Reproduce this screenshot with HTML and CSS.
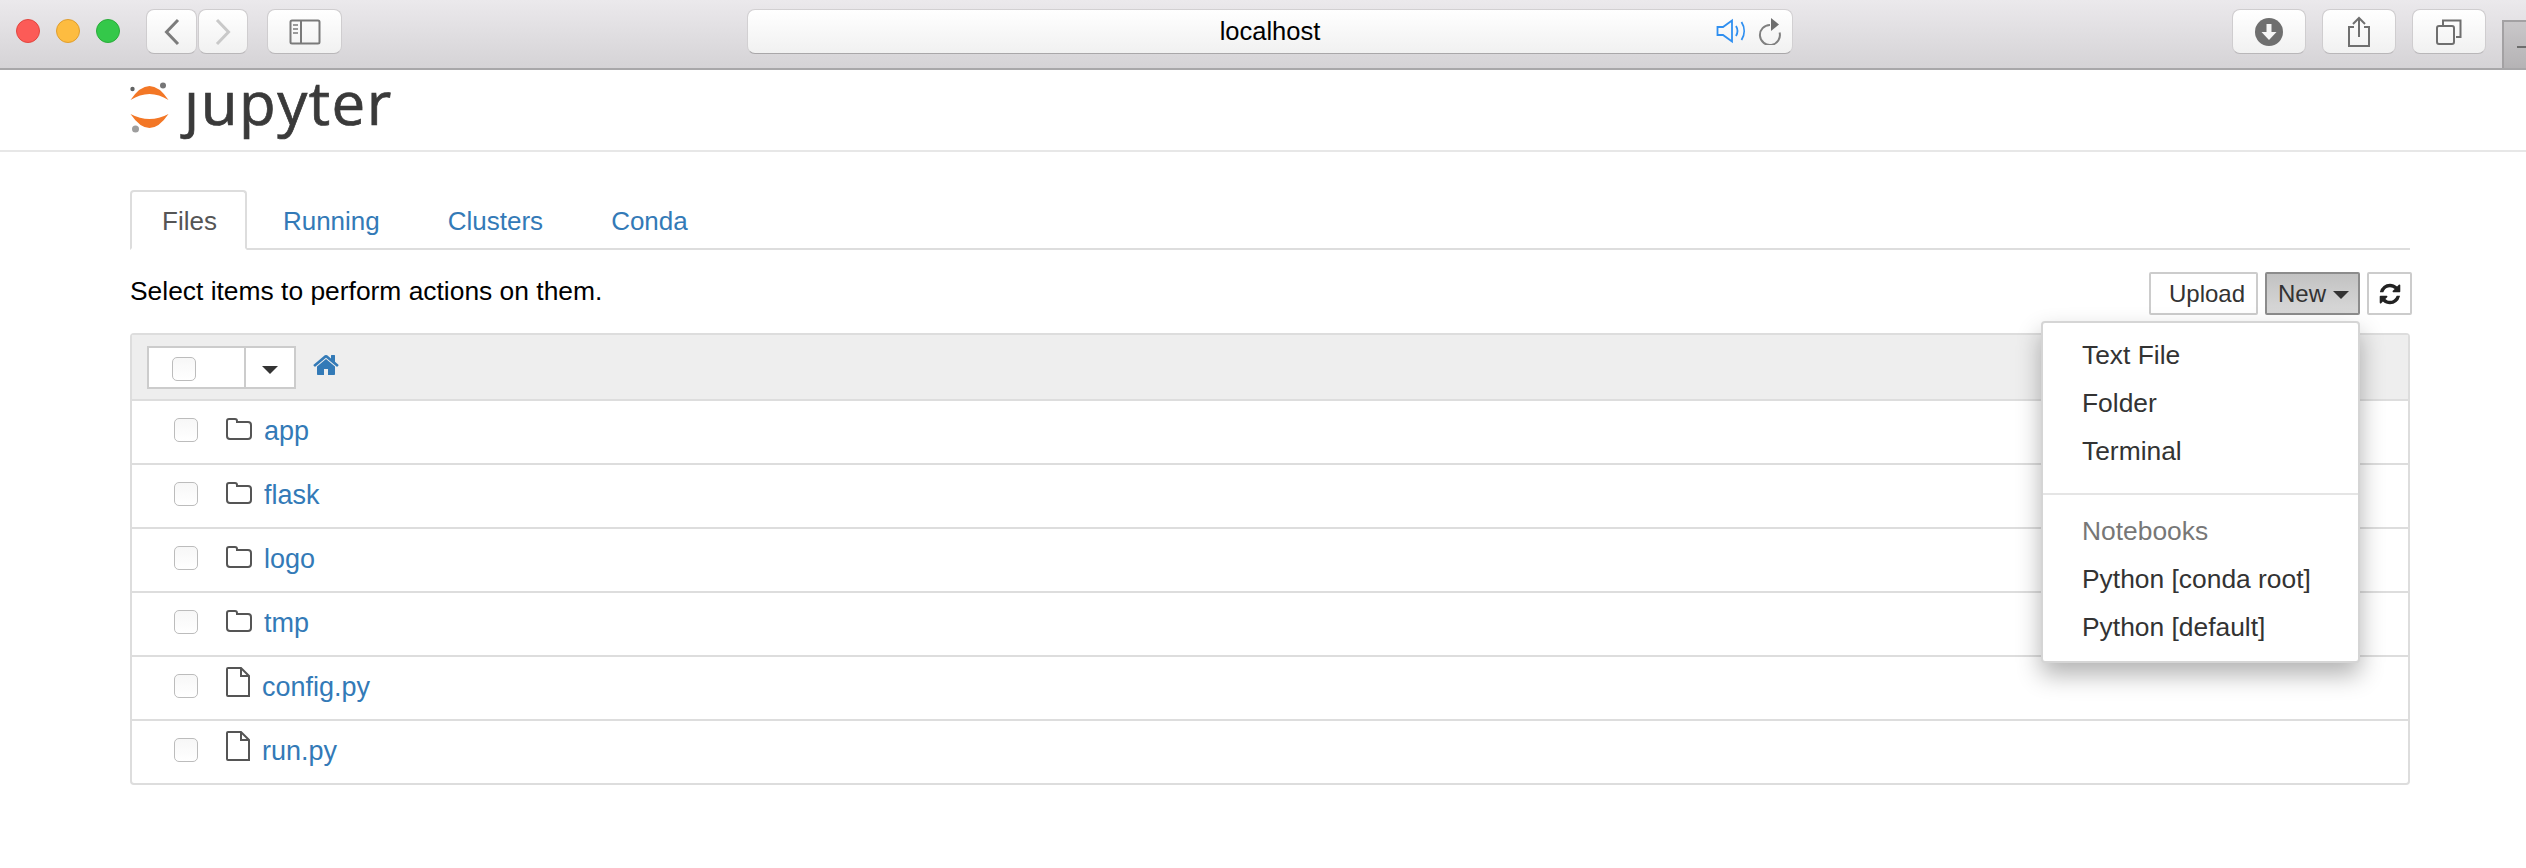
FILE: index.html
```html
<!DOCTYPE html>
<html lang="en">
<head>
    <meta charset="UTF-8">
    <title>Home</title>
    <link rel="stylesheet" href="styles.css">
</head>
<body>
    <!-- Browser chrome -->
    <div class="chrome">
        <div class="lights">
            <span class="light red"></span>
            <span class="light yellow"></span>
            <span class="light green"></span>
        </div>
        <div class="nav-pair">
            <div class="tool nav-btn">
                <svg width="16" height="28" viewBox="0 0 16 28"><path d="M14 2 2.500 14 14 26" fill="none" stroke="#7c7c7c" stroke-width="3"/></svg>
            </div>
            <div class="tool nav-btn next">
                <svg width="16" height="28" viewBox="0 0 16 28"><path d="M2 2 13.500 14 2 26" fill="none" stroke="#c9c9c9" stroke-width="3"/></svg>
            </div>
        </div>
        <div class="tool side-btn">
            <svg width="32" height="26" viewBox="0 0 32 26">
                <rect x="1.500" y="1.500" width="29" height="23" rx="1.500" fill="none" stroke="#7a7a7a" stroke-width="2"/>
                <path d="M12 1v24" stroke="#7a7a7a" stroke-width="2"/>
                <path d="M4 6h5M4 10h5M4 14h5" stroke="#9a9a9a" stroke-width="2"/>
            </svg>
        </div>
        <div class="url-bar">
            <span class="url-text">localhost</span>
            <div class="url-icons">
                <svg width="32" height="28" viewBox="0 0 32 28">
                    <path d="M1.500 10h5.500l9-6.500v21l-9-6.500H1.500z" fill="none" stroke="#2f8ff0" stroke-width="1.800"/>
                    <path d="M20 9c1.800 3 1.800 7 0 10M25.500 5c3.500 5.500 3.500 12.500 0 18" fill="none" stroke="#2f8ff0" stroke-width="1.800"/>
                </svg>
                <svg width="24" height="28" viewBox="0 0 24 28">
                    <path d="M12 8A10 10 0 1 0 21.600 15.500" fill="none" stroke="#808080" stroke-width="2"/>
                    <path d="M13 1l8 6.500-8 6.500z" fill="#6f6f6f"/>
                </svg>
            </div>
        </div>
        <div class="chrome-right">
            <div class="tool right-btn">
                <svg width="28" height="28" viewBox="0 0 28 28">
                    <circle cx="14" cy="14" r="14" fill="#6f6f6f"/>
                    <path d="M11.500 6h5v8h5l-7.500 8-7.500-8h5z" fill="#f6f6f6"/>
                </svg>
            </div>
            <div class="tool right-btn">
                <svg width="24" height="32" viewBox="0 0 24 32">
                    <path d="M7 11H2v19h20V11h-5" fill="none" stroke="#6f6f6f" stroke-width="2"/>
                    <path d="M12 21V2M6 8l6-6 6 6" fill="none" stroke="#6f6f6f" stroke-width="2"/>
                </svg>
            </div>
            <div class="tool right-btn">
                <svg width="26" height="26" viewBox="0 0 26 26">
                    <rect x="1" y="7" width="17" height="18" rx="2" fill="none" stroke="#6f6f6f" stroke-width="2"/>
                    <path d="M7 6V1.500h17.500V18H20" fill="none" stroke="#6f6f6f" stroke-width="2"/>
                </svg>
            </div>
        </div>
        <div class="tab-sliver"><span></span></div>
    </div>

    <!-- Jupyter header -->
    <header class="site-header">
        <div class="logo">
            <svg class="logo-mark" width="40" height="52" viewBox="0 0 40 52">
                <path d="M.5 18Q19.500-10 38.500 18 19.500 6 .5 18z" fill="#f37726"/>
                <path d="M.5 32Q19.500 60 38.500 32 19.500 42 .5 32z" fill="#f37726"/>
                <circle cx="33" cy="3.500" r="3" fill="#767677"/>
                <circle cx="2.500" cy="7" r="2.200" fill="#616262"/>
                <circle cx="5.500" cy="47" r="3.500" fill="#9e9e9e"/>
            </svg>
            <span class="logo-text"><span class="logo-j">j</span>upyter</span>
        </div>
    </header>

    <div class="container">
        <ul class="tabs">
            <li class="tab active">Files</li>
            <li class="tab">Running</li>
            <li class="tab">Clusters</li>
            <li class="tab">Conda</li>
        </ul>

        <div class="actions">
            <span class="hint">Select items to perform actions on them.</span>
            <div class="buttons">
                <button class="btn btn-upload">Upload</button>
                <div class="new-wrap">
                    <button class="btn btn-new">New <i class="caret"></i></button>
                    <!-- New menu, opened -->
                    <ul class="menu">
                        <li>Text File</li>
                        <li>Folder</li>
                        <li>Terminal</li>
                        <li class="divider"></li>
                        <li class="menu-head">Notebooks</li>
                        <li>Python [conda root]</li>
                        <li>Python [default]</li>
                    </ul>
                </div>
                <button class="btn btn-refresh">
                    <svg width="24" height="24" viewBox="0 0 1792 1792"><path fill="#222" d="M1639 1056q0 5-1 7-64 268-268 434.500t-478 166.500q-146 0-282.500-55t-243.500-157l-129 129q-19 19-45 19t-45-19-19-45v-448q0-26 19-45t45-19h448q26 0 45 19t19 45-19 45l-137 137q71 66 161 102t187 36q134 0 250-65t186-179q11-17 53-117 8-23 30-23h192q13 0 22.500 9.500t9.500 22.500zm25-800v448q0 26-19 45t-45 19h-448q-26 0-45-19t-19-45 19-45l138-138q-148-137-349-137-134 0-250 65t-186 179q-11 17-53 117-8 23-30 23h-199q-13 0-22.500-9.500t-9.500-22.500v-7q65-268 270-434.500t480-166.500q146 0 284 55.500t245 156.500l130-129q19-19 45-19t45 19 19 45z"/></svg>
                </button>
            </div>
        </div>

        <div class="file-list">
            <div class="list-head">
                <div class="select-box">
                    <div class="select-check"><span class="check"></span></div>
                    <div class="select-caret"><i class="caret dark"></i></div>
                </div>
                <svg class="home" width="28" height="28" viewBox="0 0 1792 1792"><path fill="#337ab7" d="M1472 992v480q0 26-19 45t-45 19h-384v-384h-256v384h-384q-26 0-45-19t-19-45v-480q0-1 .5-3t.5-3l575-474 575 474q1 2 1 6zm223-69l-62 74q-8 9-21 11h-3q-13 0-21-7l-692-577-692 577q-12 8-24 7-13-2-21-11l-62-74q-8-10-7-23.500t11-22.500l719-599q32-26 76-26t76 26l244 204v-195q0-14 9-23t23-9h192q14 0 23 9t9 23v408l219 182q10 8 11 21.500t-7 23.500z"/></svg>
            </div>

            <div class="row">
                <span class="check"></span>
                <svg class="item-icon" width="26" height="24" viewBox="0 0 26 24"><path d="M1 4q0-2 2-2h6q2 0 2 2v1h11q3 0 3 3v11q0 3-3 3H4q-3 0-3-3z" fill="none" stroke="#555" stroke-width="2"/></svg>
                <a class="item-name">app</a>
            </div>
            <div class="row">
                <span class="check"></span>
                <svg class="item-icon" width="26" height="24" viewBox="0 0 26 24"><path d="M1 4q0-2 2-2h6q2 0 2 2v1h11q3 0 3 3v11q0 3-3 3H4q-3 0-3-3z" fill="none" stroke="#555" stroke-width="2"/></svg>
                <a class="item-name">flask</a>
            </div>
            <div class="row">
                <span class="check"></span>
                <svg class="item-icon" width="26" height="24" viewBox="0 0 26 24"><path d="M1 4q0-2 2-2h6q2 0 2 2v1h11q3 0 3 3v11q0 3-3 3H4q-3 0-3-3z" fill="none" stroke="#555" stroke-width="2"/></svg>
                <a class="item-name">logo</a>
            </div>
            <div class="row">
                <span class="check"></span>
                <svg class="item-icon" width="26" height="24" viewBox="0 0 26 24"><path d="M1 4q0-2 2-2h6q2 0 2 2v1h11q3 0 3 3v11q0 3-3 3H4q-3 0-3-3z" fill="none" stroke="#555" stroke-width="2"/></svg>
                <a class="item-name">tmp</a>
            </div>
            <div class="row file">
                <span class="check"></span>
                <svg class="item-icon" width="24" height="30" viewBox="0 0 24 30"><path d="M2 1h13l8 8v20H2q-1 0-1-1V2q0-1 1-1zM15 1v8h8" fill="none" stroke="#555" stroke-width="2"/></svg>
                <a class="item-name">config.py</a>
            </div>
            <div class="row file">
                <span class="check"></span>
                <svg class="item-icon" width="24" height="30" viewBox="0 0 24 30"><path d="M2 1h13l8 8v20H2q-1 0-1-1V2q0-1 1-1zM15 1v8h8" fill="none" stroke="#555" stroke-width="2"/></svg>
                <a class="item-name">run.py</a>
            </div>
        </div>
    </div>
</body>
</html>
```

FILE: styles.css
```css
* {
    box-sizing: border-box;
}

body {
    margin: 0;
    background: #fff;
    color: #000;
    font-family: "Liberation Sans", Arial, sans-serif;
    font-size: 26px;
    overflow: hidden;
}

ul {
    list-style: none;
    margin: 0;
    padding: 0;
}

/* Browser chrome */
.chrome {
    height: 70px;
    display: flex;
    align-items: flex-start;
    padding: 9px 0 0 16px;
    background: linear-gradient(#ebe9ec, #d5d3d6);
    border-bottom: 2px solid #a8a7a9;
}

.lights {
    display: flex;
    gap: 16px;
    margin-top: 10px;
}

.light {
    width: 24px;
    height: 24px;
    border-radius: 50%;
}

.red {
    background: #fc5b57;
    border: 1px solid #e2463f;
}

.yellow {
    background: #fdbc40;
    border: 1px solid #e09e2e;
}

.green {
    background: #34c84a;
    border: 1px solid #2aac3a;
}

.tool {
    height: 45px;
    display: flex;
    align-items: center;
    justify-content: center;
    background: linear-gradient(#fff, #f1f1f1);
    border: 1px solid #cfcdcf;
    border-bottom-color: #b9b7b9;
    border-radius: 8px;
}

.nav-pair {
    display: flex;
    gap: 1px;
    margin-left: 26px;
}

.nav-btn {
    width: 51px;
}

.nav-btn.next {
    width: 50px;
}

.side-btn {
    width: 75px;
    margin-left: 19px;
}

.url-bar {
    width: 1046px;
    height: 45px;
    margin-left: 405px;
    position: relative;
    display: flex;
    align-items: center;
    justify-content: center;
    background: linear-gradient(#fff, #f1f1f1);
    border: 1px solid #d2d0d2;
    border-bottom-color: #a9a7a9;
    border-radius: 8px;
}

.url-text {
    font-size: 25.500px;
}

.url-icons {
    position: absolute;
    right: 10px;
    top: 7px;
    display: flex;
    gap: 10px;
}

.chrome-right {
    display: flex;
    gap: 16px;
    margin-left: 439px;
}

.right-btn {
    width: 74px;
}

.tab-sliver {
    width: 24px;
    height: 48px;
    margin-left: 16px;
    margin-top: 11px;
    padding: 24px 0 0 13px;
    background: linear-gradient(#c9c7c9, #b5b3b5);
    border: 2px solid #a3a1a3;
    border-width: 2px 0 0 2px;
}

.tab-sliver span {
    display: block;
    height: 2px;
    background: #6d6d6d;
}

/* Jupyter header */
.site-header {
    height: 82px;
    border-bottom: 2px solid #e7e7e7;
    padding: 10px 0 0 130px;
}

.logo {
    display: flex;
    align-items: flex-start;
}

.logo-mark {
    margin-top: 2px;
}

.logo-text {
    font-family: "Open Sans", sans-serif;
    font-size: 60px;
    line-height: 52px;
    letter-spacing: 1.500px;
    -webkit-text-stroke: 0.7px #3a3a3a;
    color: #3a3a3a;
    margin: -4px 0 0 14px;
}

/* the logo's j has no dot */
.logo-j {
    display: inline-block;
    clip-path: inset(16px -10px -20px -10px);
}

.container {
    margin: 0 116px 0 130px;
}

/* Tabs */
.tabs {
    display: flex;
    margin-top: 38px;
    height: 60px;
    border-bottom: 2px solid #ddd;
}

.tab {
    height: 60px;
    padding: 0 30px;
    margin-right: 4px;
    line-height: 58px;
    color: #337ab7;
    border: 2px solid transparent;
    border-radius: 4px 4px 0 0;
}

.tab.active {
    padding-right: 28px;
    color: #555;
    background: #fff;
    border-color: #ddd #ddd #fff;
}

/* Actions */
.actions {
    display: flex;
    justify-content: space-between;
    margin: 22px -2px 18px 0;
}

.hint {
    font-size: 26.400px;
    line-height: 38px;
}

.buttons {
    display: flex;
    gap: 7px;
}

.btn {
    height: 43px;
    padding: 0 16px;
    font-family: inherit;
    font-size: 24px;
    color: #333;
    background: #fff;
    border: 2px solid #ccc;
    border-radius: 2px;
}

.btn-upload {
    width: 109px;
    padding: 0 10px 0 17px;
}

.btn-new {
    width: 95px;
    padding: 0 0 0 11px;
    text-align: left;
    background: linear-gradient(#c2c2c2, #d8d8d8);
    border-color: #8c8c8c;
    white-space: nowrap;
}

.btn-refresh {
    width: 45px;
    padding: 0;
    display: flex;
    align-items: center;
    justify-content: center;
}

.caret {
    display: inline-block;
    width: 0;
    height: 0;
    vertical-align: middle;
    border-top: 8px solid #333;
    border-left: 8px solid transparent;
    border-right: 8px solid transparent;
}

.new-wrap {
    position: relative;
}

/* New menu */
.menu {
    position: absolute;
    top: 49px;
    right: 0;
    width: 319px;
    height: 342px;
    padding: 8px 0;
    font-size: 26.400px;
    background: #fff;
    border: 2px solid #d5d5d5;
    border-radius: 4px;
    box-shadow: 0 12px 24px rgba(0, 0, 0, 0.3);
    z-index: 5;
}

.menu li {
    height: 48px;
    line-height: 48px;
    padding-left: 39px;
    color: #333;
}

.menu .divider {
    height: 2px;
    margin: 18px 0 12px;
    padding: 0;
    background: #e5e5e5;
}

.menu .menu-head {
    color: #777;
}

/* File list */
.file-list {
    border: 2px solid #ddd;
    border-radius: 4px;
}

.list-head {
    height: 64px;
    display: flex;
    align-items: flex-start;
    padding: 11px 0 0 15px;
    background: #eee;
}

.select-box {
    width: 149px;
    height: 43px;
    display: flex;
    background: #fff;
    border: 2px solid #ccc;
}

.select-check {
    width: 97px;
    padding: 9px 0 0 23px;
    border-right: 2px solid #ccc;
}

.select-caret {
    flex: 1;
    display: flex;
    align-items: center;
    justify-content: center;
}

.caret.dark {
    margin-top: 4px;
}

.home {
    margin: 5px 0 0 16px;
}

.check {
    display: block;
    width: 24px;
    height: 24px;
    background: linear-gradient(#f7f7f7, #fff);
    border: 1px solid #bcbcbc;
    border-radius: 5px;
}

.row {
    height: 64px;
    display: flex;
    align-items: center;
    padding: 0 0 4px 42px;
    border-top: 2px solid #ddd;
}

.item-icon {
    margin: -2px 0 0 28px;
}

.item-name {
    margin: 2px 0 0 12px;
    font-size: 27px;
    color: #337ab7;
}

.row.file .item-icon {
    margin-top: -8px;
}
```
